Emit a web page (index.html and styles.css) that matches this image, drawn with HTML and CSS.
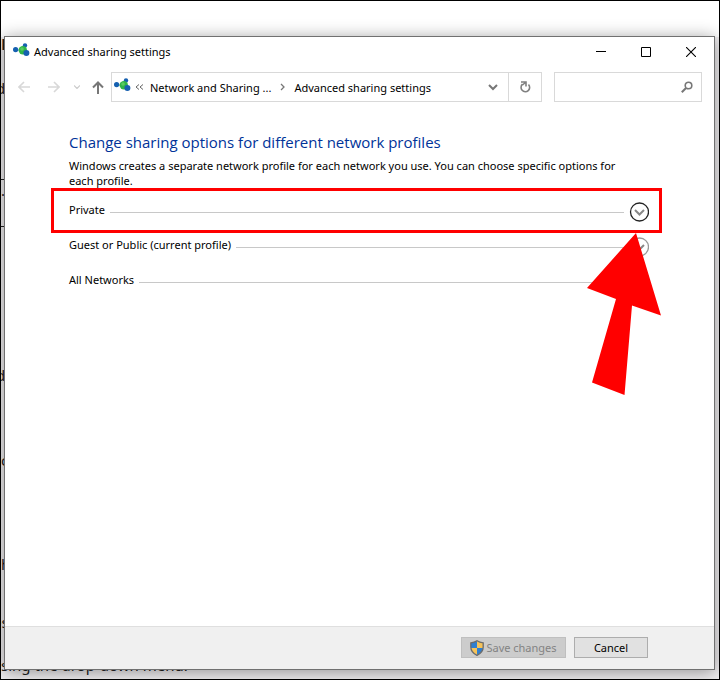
FILE: index.html
```html
<!DOCTYPE html>
<html lang="en">
<head>
    <meta charset="UTF-8">
    <meta name="viewport" content="width=device-width, initial-scale=1.0">
    <title>Advanced sharing settings</title>
    <link rel="stylesheet" href="styles.css">
</head>
<body>
    <svg width="0" height="0" class="defs" aria-hidden="true">
        <symbol id="network" viewBox="0 0 17 14">
            <path d="M3 7l7 0M12 3l-2 4 3 3" stroke="#8fb7d6" fill="none"/>
            <circle cx="2.6" cy="6.6" r="2.6" fill="#1660b0"/>
            <circle cx="12" cy="2.4" r="2.2" fill="#1660b0"/>
            <circle cx="9.8" cy="7.2" r="4.2" fill="#2fb548"/>
            <circle cx="9" cy="6" r="1.8" fill="#5acb62"/>
            <circle cx="13.4" cy="10" r="3" fill="#1660b0"/>
        </symbol>
        <symbol id="expand" viewBox="0 0 20 20">
            <circle cx="10.500" cy="10" r="9" fill="#fff" stroke="currentColor" stroke-width="1.3"/>
            <path d="M6 8l4.500 4.500L15 8" fill="none" stroke="#888" stroke-width="2"/>
        </symbol>
    </svg>

    <div class="desktop">
        <!-- document behind the window -->
        <div class="backdrop" aria-hidden="true">
            <div class="line title">r</div>
            <div class="line cut">d</div>
            <div class="cell">.</div>
            <div class="line">d</div>
            <div class="line gap">c</div>
            <div class="line far">h</div>
            <div class="line near">es</div>
            <div class="line last">sing the drop-down menu.</div>
        </div>

        <div class="window">
            <header class="titlebar">
                <svg class="app-icon" width="17" height="14"><use href="#network"/></svg>
                <span class="caption">Advanced sharing settings</span>
                <button class="sys" aria-label="Minimize"><svg width="10" height="10"><path d="M0 4.500h10" stroke="#000"/></svg></button>
                <button class="sys" aria-label="Maximize"><svg width="10" height="10"><path d="M.5.5h9v9h-9z" fill="none" stroke="#000"/></svg></button>
                <button class="sys" aria-label="Close"><svg width="10" height="10"><path d="M0 0l10 10M10 0L0 10" stroke="#000" stroke-width="1.1"/></svg></button>
            </header>

            <nav class="toolbar">
                <button class="nav back" aria-label="Back"><svg width="12" height="12"><path d="M12 6H1M6 1L1 6l5 5" fill="none" stroke="#d8d8d8" stroke-width="1.600"/></svg></button>
                <button class="nav forward" aria-label="Forward"><svg width="12" height="12"><path d="M0 6h11M6 1l5 5-5 5" fill="none" stroke="#d8d8d8" stroke-width="1.600"/></svg></button>
                <button class="nav recent" aria-label="Recent locations"><svg width="6" height="4"><path d="M0 .5l3 3 3-3" fill="none" stroke="#ccc" stroke-width="1.200"/></svg></button>
                <button class="nav up" aria-label="Up"><svg width="12" height="13"><path d="M6 13V1.500M1 6.500l5-5 5 5" fill="none" stroke="#777" stroke-width="2"/></svg></button>
                <div class="address">
                    <svg class="app-icon" width="17" height="14"><use href="#network"/></svg>
                    <svg class="crumbs" width="9" height="6"><path d="M4 .5L1 3l3 2.500M8 .5L5 3l3 2.500" fill="none" stroke="#666"/></svg>
                    <a class="crumb" href="#">Network and Sharing ...</a>
                    <svg class="sep" width="5" height="8"><path d="M1 1l3 3-3 3" fill="none" stroke="#777" stroke-width="1.300"/></svg>
                    <a class="crumb" href="#">Advanced sharing settings</a>
                    <button class="drop" aria-label="Previous locations"><svg width="10" height="7"><path d="M1 1l4 4 4-4" fill="none" stroke="#777" stroke-width="2"/></svg></button>
                    <button class="refresh" aria-label="Refresh"><svg width="12" height="12"><path d="M3.500 3.200A4.300 4.300 0 1 0 9.500 3.500M2 1h5v4.500M7 1L3.500 4" fill="none" stroke="#808080" stroke-width="1.600"/></svg></button>
                </div>
                <label class="search">
                    <input type="text" aria-label="Search">
                    <svg width="12" height="12"><circle cx="7.500" cy="4.500" r="3.300" fill="none" stroke="#777" stroke-width="1.600"/><path d="M5 7L.8 11.200" stroke="#777" stroke-width="2"/></svg>
                </label>
            </nav>

            <main class="content">
                <h1>Change sharing options for different network profiles</h1>
                <p>Windows creates a separate network profile for each network you use. You can choose specific options for each profile.</p>
                <div class="profiles">
                    <button class="profile active">
                        <span>Private</span><i class="rule"></i>
                        <svg width="20" height="20"><use href="#expand"/></svg>
                    </button>
                    <button class="profile">
                        <span>Guest or Public (current profile)</span><i class="rule"></i>
                        <svg width="20" height="20"><use href="#expand"/></svg>
                    </button>
                    <button class="profile">
                        <span>All Networks</span><i class="rule"></i>
                        <svg width="20" height="20"><use href="#expand"/></svg>
                    </button>
                    <div class="highlight"></div>
                    <svg class="pointer" width="74" height="162" viewBox="0 0 74 162"><path d="M49 0l25 82.500-29-10L37.500 162 5 149.500 29 66 0 55z" fill="#f00"/></svg>
                </div>
            </main>

            <footer class="actions">
                <button class="btn save" disabled>
                    <svg width="14" height="16" viewBox="0 0 14 16">
                        <path d="M7 1L1 3v5h6z" fill="#2f7fd0"/>
                        <path d="M7 1l6 2v5H7z" fill="#f6c35a"/>
                        <path d="M1 8c.5 3.500 3 5.500 6 7V8z" fill="#f6c35a"/>
                        <path d="M13 8c-.5 3.500-3 5.500-6 7V8z" fill="#2f7fd0"/>
                        <path d="M7 .8c-2 1.400-4 1.900-6.200 2V7c0 4 2.700 6.700 6.200 8.300 3.500-1.600 6.200-4.300 6.200-8.300V2.800C11 2.700 9 2.200 7 .8z" fill="none" stroke="#6b6b6b" stroke-width="1.300"/>
                    </svg>
                    <span>Save changes</span>
                </button>
                <button class="btn cancel">Cancel</button>
            </footer>
        </div>
    </div>
</body>
</html>
```
FILE: styles.css
```css
* { box-sizing: border-box; }
body { margin: 0; font-family: "Noto Sans", "Open Sans", sans-serif; font-size: 11px; color: #000; }
button { font: inherit; color: inherit; background: none; border: none; padding: 0; }
svg { display: block; flex: none; }
a { color: inherit; text-decoration: none; }
.defs { position: absolute; }

.desktop { position: relative; display: flex; min-height: 100vh; padding: 35px 4px 9px 3px; border: 1px solid #000; overflow: hidden; }
.backdrop { position: absolute; inset: 0; overflow: hidden; background: linear-gradient(#fff 36px, #f0eef0 36px); font-size: 15px; line-height: 20px; white-space: nowrap; color: #222; }
.line.title { margin-top: 32px; font-size: 20px; font-weight: bold; }
.line.cut { margin: 25px 0 0 -5px; }
.cell { width: 40px; height: 48px; margin-top: 81px; border-top: 1px solid #222; border-bottom: 1px solid #222; }
.cell + .line { margin: 138px 0 0 -5px; }
.line.gap { margin-top: 65px; }
.line.far { margin-top: 84px; }
.line.near { margin: 38px 0 0 -8px; }
.line.last { margin-top: 23px; }

.window { position: relative; flex: 1; display: flex; flex-direction: column; background: #fff; border: 1px solid #707070; box-shadow: 0 2px 16px rgba(0,0,0,0.4); }

.titlebar { display: flex; align-items: center; height: 29px; padding: 0 1px 0 8px; }
.app-icon { margin-bottom: 4px; }
.caption { flex: 1; margin-left: 4px; }
.sys { display: flex; align-items: center; justify-content: center; width: 45px; height: 29px; }

.toolbar { display: flex; align-items: center; padding: 6px 12px 0 13px; }
.nav.forward { margin-left: 18px; }
.nav.recent { margin-left: 14px; }
.nav.up { margin: 0 7px 0 12px; }
.address { flex: 1; display: flex; align-items: center; height: 30px; padding-left: 2px; border: 1px solid #d9d9d9; }
.crumbs { margin: 0 6px 0 4px; }
.sep { margin: 0 9px; }
.drop { display: flex; align-items: center; justify-content: center; width: 30px; height: 28px; margin-left: auto; }
.refresh { display: flex; align-items: center; justify-content: center; width: 33px; height: 28px; border-left: 1px solid #d9d9d9; }
.search { display: flex; align-items: center; width: 148px; height: 30px; margin-left: 12px; padding-right: 8px; border: 1px solid #d9d9d9; }
.search input { flex: 1; min-width: 0; height: 28px; border: none; outline: none; font: inherit; }

.content { flex: 1; padding: 28px 65px 0 64px; }
h1 { margin: 0; font-family: "Open Sans", "Noto Sans", sans-serif; font-size: 15px; line-height: 24px; font-weight: normal; color: #039; }
p { margin: 4px 0 14px; padding-right: 16px; line-height: 15px; }
.profiles { position: relative; }
.profile { display: flex; align-items: center; width: 100%; height: 20px; margin-bottom: 15px; color: #999; }
.profile span { margin-right: 5px; line-height: 16px; padding-bottom: 4px; color: #000; }
.rule { flex: 1; height: 1px; margin-right: 5px; background: #c8c8c8; }
.profile.active { color: #222; }
.highlight { position: absolute; inset: -14px -13px auto -18px; height: 45px; border: 3px solid #f00; }
.pointer { position: absolute; top: 31px; right: -12px; }

.actions { display: flex; justify-content: flex-end; gap: 8px; height: 43px; padding: 10px 66px 0 0; background: #f0f0f0; border-top: 1px solid #dfdfdf; }
.btn { display: flex; align-items: center; justify-content: center; height: 21px; min-width: 74px; padding: 0 8px; background: #e1e1e1; border: 1px solid #adadad; }
.btn.save { min-width: 105px; }
.btn:disabled { color: #838383; background: #ccc; border-color: #bfbfbf; }
.btn svg { margin-right: 2px; }
```
